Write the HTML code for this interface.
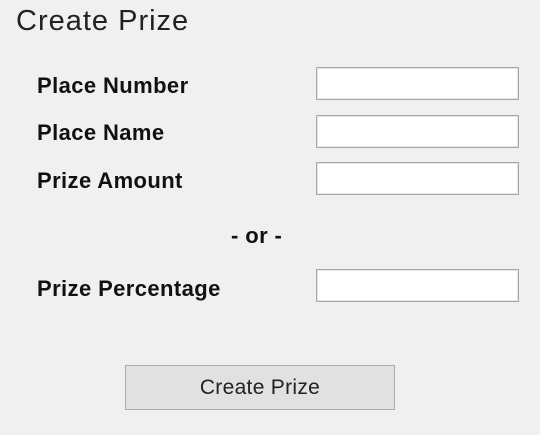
<!DOCTYPE html>
<html><head><style>
html,body{margin:0;padding:0;}
body{width:540px;height:435px;background:#f0f0f0;position:relative;overflow:hidden;font-family:"Liberation Sans",Arial,sans-serif;color:#111;}
.t{position:absolute;white-space:nowrap;}
.title{left:16px;top:5px;font-size:29px;letter-spacing:1px;color:#222;}
.lbl{left:37px;font-size:22px;font-weight:bold;letter-spacing:0.4px;}
.in{position:absolute;left:316px;width:201px;height:31px;background:#fff;border:1px solid #a8a8a8;box-shadow:inset 0 0 0 1px #e6e6e6;}
.btn{position:absolute;left:125px;top:365px;width:268px;height:43px;background:#e1e1e1;border:1px solid #adadad;text-align:center;line-height:43px;font-size:21px;letter-spacing:0.3px;color:#222;}
</style></head><body>
<div class="t title">Create Prize</div>
<div class="t lbl" style="top:73px">Place Number</div>
<div class="t lbl" style="top:120px">Place Name</div>
<div class="t lbl" style="top:168px">Prize Amount</div>
<div class="t lbl" style="left:231px;top:223px">- or -</div>
<div class="t lbl" style="top:276px">Prize Percentage</div>
<div class="in" style="top:67px"></div>
<div class="in" style="top:115px"></div>
<div class="in" style="top:162px"></div>
<div class="in" style="top:269px"></div>
<div class="btn">Create Prize</div>
</body></html>
